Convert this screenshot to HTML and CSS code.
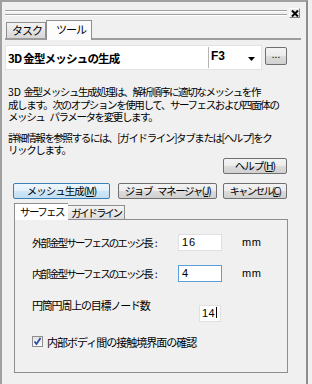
FILE: index.html
```html
<!DOCTYPE html>
<html lang="ja">
<head>
    <meta charset="UTF-8">
    <title>3D 金型メッシュの生成</title>
    <link rel="stylesheet" href="styles.css">
</head>
<body>
    <div class="frame">
        <div class="gripbar">
            <div class="grip"></div>
            <div class="close">
                <svg width="8" height="7" viewBox="0 0 8 7"><path d="M1 0.5 L7 6.5 M7 0.5 L1 6.5" stroke="#000" stroke-width="2"/></svg>
            </div>
        </div>

        <div class="tabs">
            <div class="tab">タスク</div>
            <div class="tab active">ツール</div>
        </div>

        <div class="titlerow">
            <div class="titlebox">
                <span class="title">3D 金型メッシュの生成</span>
                <span class="key">
                    F3
                    <svg width="7" height="4" viewBox="0 0 7 4"><path d="M0 0 H7 L3.5 4 Z" fill="#000"/></svg>
                </span>
            </div>
            <button class="btn dots">...</button>
        </div>

        <div class="desc">
            <p><span class="sp">3D </span>金型メッシュ生成処理は、解析順序に適切なメッシュを作<br>成します。次のオプションを使用して、サーフェスおよび四面体の<br>メッシュ<span class="gap"></span>パラメータを変更します。</p>
            <p>詳細情報を参照するには、[ガイドライン]タブまたは[ヘルプ]をク<br>リックします。</p>
        </div>

        <div class="helprow">
            <button class="btn help">ヘルプ(<u>H</u>)</button>
        </div>

        <div class="actions">
            <button class="btn primary">メッシュ生成(<u>M</u>)</button>
            <button class="btn jobs">ジョブ<span class="gap"></span>マネージャ(<u>J</u>)</button>
            <button class="btn cancel">キャンセル(<u>C</u>)</button>
        </div>

        <div class="subtabs">
            <div class="subtab active">サーフェス</div>
            <div class="subtab">ガイドライン</div>
        </div>

        <div class="panel">
            <div class="row">
                <span class="label">外部金型サーフェスのエッジ長<span class="colon">:</span></span>
                <span class="field">16</span>
                <span class="unit">mm</span>
            </div>
            <div class="row">
                <span class="label">内部金型サーフェスのエッジ長<span class="colon">:</span></span>
                <span class="field focus">4</span>
                <span class="unit">mm</span>
            </div>
            <div class="row nodes">
                <span class="label">円筒円周上の目標ノード数</span>
                <span class="field small">14<i class="caret"></i></span>
            </div>
            <div class="check">
                <span class="box">
                    <svg width="9" height="9" viewBox="0 0 9 9"><path d="M1.5 4.5 L3.5 7 L7.5 1" stroke="#2b4fa8" stroke-width="1.8" fill="none"/></svg>
                </span>
                <span>内部ボディ間の接触境界面の確認</span>
            </div>
        </div>
    </div>
</body>
</html>
```

FILE: styles.css
```css
/* reset */
* {
    margin: 0;
    padding: 0;
    box-sizing: border-box;
}

body {
    width: 312px;
    height: 384px;
    background: #f0f0f0;
    font-family: "Noto Sans CJK JP", "DejaVu Sans", sans-serif;
    font-size: 11px;
    color: #000;
    overflow: hidden;
}

.frame {
    width: 308px;
    height: 384px;
    border-left: 2px solid #a0a0a0;
    border-top: 2px solid #a0a0a0;
    border-right: 2px solid #8e8e8e;
    padding-left: 3px;
}

/* grip bar with close box */
.gripbar {
    display: flex;
    height: 18px;
    padding-top: 6px;
}

.grip {
    width: 282px;
    height: 5px;
    margin-top: 2px;
    border-top: 1px solid #a0a0a0;
    border-bottom: 1px solid #a0a0a0;
    box-shadow: inset 0 1px #fff, 0 1px #fff;
}

.close {
    width: 11px;
    height: 10px;
    margin-left: 2px;
    background: #e8e8e8;
    border: 1px solid #fff;
    border-right-color: #808080;
    border-bottom-color: #808080;
    display: flex;
    align-items: center;
    justify-content: center;
}

/* top tabs */
.tabs {
    display: flex;
    align-items: flex-end;
    height: 20px;
    margin-right: 5px;
    border-bottom: 2px solid #9c9c9c;
}

.tab {
    height: 16px;
    width: 40px;
    margin-left: 1px;
    border: 1px solid #8f8f8f;
    border-bottom: none;
    background: linear-gradient(#f4f4f4, #d6d6d6);
    line-height: 15px;
    padding-left: 5px;
    letter-spacing: -1px;
    white-space: nowrap;
}

.tab.active {
    width: 46px;
    height: 20px;
    margin-left: 0;
    margin-bottom: -2px;
    background: #fcfcfc;
    line-height: 16px;
    padding-left: 9px;
}

/* title row */
.titlerow {
    display: flex;
    margin-top: 5px;
    height: 25px;
}

.titlebox {
    width: 257px;
    height: 25px;
    background: #fff;
    border: 1px solid #e2e2e2;
    display: flex;
    align-items: center;
}

.title {
    width: 202px;
    padding-left: 2px;
    font-weight: bold;
    font-size: 11.5px;
    letter-spacing: -0.8px;
    white-space: nowrap;
}

.key {
    flex: 1;
    height: 21px;
    border-left: 1px solid #b4b4b4;
    display: flex;
    align-items: center;
    justify-content: space-between;
    padding: 0 6px 4px 2px;
    font-weight: bold;
    font-family: "Liberation Sans", sans-serif;
    font-size: 12px;
}

.key svg {
    margin-top: 6px;
}

/* buttons */
.btn {
    font-family: inherit;
    font-size: 10.5px;
    letter-spacing: -1px;
    height: 16px;
    line-height: 13px;
    padding: 0;
    white-space: nowrap;
    border: 1px solid #707070;
    border-radius: 2px;
    background: linear-gradient(#f3f3f3 0%, #ebebeb 50%, #dcdcdc 51%, #d0d0d0 100%);
    color: #000;
}

.btn u {
    text-decoration: underline;
}

.dots {
    width: 22px;
    height: 18px;
    margin: 2px 0 0 3px;
    font-size: 10px;
    letter-spacing: 0;
    line-height: 10px;
    padding-bottom: 4px;
}

/* description */
.desc {
    margin-top: 16px;
    padding-left: 3px;
    font-size: 10.5px;
    line-height: 12.5px;
    letter-spacing: -1.4px;
    white-space: nowrap;
}

.desc .sp {
    letter-spacing: 0;
}

.desc p + p {
    margin-top: 8px;
}

.gap {
    display: inline-block;
    width: 5px;
}

.helprow {
    display: flex;
    justify-content: flex-end;
    width: 282px;
    margin-top: 1px;
}

.help {
    width: 64px;
}

.actions {
    display: flex;
    margin-top: 9px;
    margin-left: 8px;
}

.primary {
    width: 97px;
    border-color: #3c7fb1;
    background: linear-gradient(#eef7fd 0%, #e1f0fb 50%, #cfe6f7 51%, #c2def3 100%);
}

.jobs {
    width: 99px;
    margin-left: 8px;
    letter-spacing: -1.4px;
}

.cancel {
    width: 64px;
    margin-left: 6px;
    font-size: 10px;
    letter-spacing: -1.6px;
}

/* inner tabs */
.subtabs {
    display: flex;
    align-items: flex-end;
    margin-top: 4px;
    margin-left: 9px;
    height: 16px;
}

.subtab {
    height: 14px;
    width: 57px;
    border: 1px solid #8f8f8f;
    border-bottom: none;
    border-left: none;
    background: linear-gradient(#f4f4f4, #dedede);
    font-size: 10.5px;
    line-height: 13px;
    padding-left: 3px;
    letter-spacing: -2.2px;
    white-space: nowrap;
}

.subtab.active {
    width: 54px;
    height: 17px;
    border-left: 1px solid #8f8f8f;
    border-right: none;
    margin-bottom: -1px;
    background: #fff;
    position: relative;
    line-height: 15px;
    padding-left: 5px;
    letter-spacing: -1.6px;
}

.panel {
    width: 274px;
    height: 154px;
    margin-left: 9px;
    border: 1px solid #8c8e94;
    padding: 14px 0 0 17px;
}

.row {
    display: flex;
    align-items: center;
    height: 17px;
    margin-bottom: 14px;
}

.label {
    width: 146px;
    font-size: 10.5px;
    letter-spacing: -1.9px;
    white-space: nowrap;
}

.colon {
    letter-spacing: 0;
    margin-left: 3px;
}

.field {
    width: 44px;
    height: 17px;
    background: #fff;
    border: 1px solid #e0e0e0;
    padding-left: 3px;
    line-height: 15px;
    font-family: "Liberation Sans", sans-serif;
    font-size: 11px;
    letter-spacing: 1px;
}

.field.focus {
    border-color: #5a9fd8;
}

.unit {
    margin-left: 20px;
    font-family: "Liberation Sans", sans-serif;
    letter-spacing: 0.5px;
}

.row.nodes {
    align-items: flex-start;
    margin-top: 23px;
    margin-bottom: 12px;
}

.row.nodes .label {
    margin-top: -8px;
    width: 167px;
    font-size: 11px;
    letter-spacing: -1.2px;
}

.field.small {
    width: 22px;
    padding-left: 2px;
    letter-spacing: 0.5px;
}

.caret {
    display: inline-block;
    width: 1px;
    height: 11px;
    background: #000;
    vertical-align: -1px;
    margin-left: 1px;
}

.check {
    display: flex;
    align-items: center;
    letter-spacing: -1px;
    white-space: nowrap;
}

.box {
    width: 11px;
    height: 11px;
    margin-right: 4px;
    border: 1px solid #8f8f8f;
    background: linear-gradient(#e2e2e2, #fbfbfb);
    display: flex;
    align-items: center;
    justify-content: center;
}
```
